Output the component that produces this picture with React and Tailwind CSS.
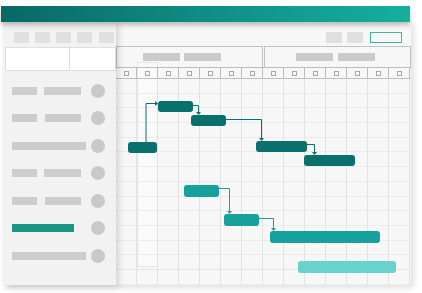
import React from "react";

const listRows = [
  { type: "split" },
  { type: "split2" },
  { type: "full" },
  { type: "split" },
  { type: "split2" },
  { type: "accent" },
  { type: "full" },
];

const dayCols = Array.from({ length: 14 });
const gridRows = Array.from({ length: 14 });

const bars = [
  { x: 42, y: 22, w: 35, h: 11, fill: "#0a706d" },
  { x: 75, y: 36, w: 35, h: 11, fill: "#0a706d" },
  { x: 12, y: 63, w: 29, h: 11, fill: "#0a706d" },
  { x: 140, y: 62, w: 51, h: 11, fill: "#0a706d" },
  { x: 188, y: 76, w: 51, h: 11, fill: "#0a706d" },
  { x: 68, y: 106, w: 35, h: 12, fill: "#16a19c" },
  { x: 108, y: 135, w: 35, h: 12, fill: "#16a19c" },
  { x: 154, y: 152, w: 110, h: 12, fill: "#16a19c" },
  { x: 182, y: 182, w: 98, h: 12, fill: "#68d2cf" },
];

// connector paths: [d, arrow tip x, arrow tip y, direction, colour]
const links = [
  { d: "M30 63 V24.5 H40", tip: [42, 24.5], dir: "right", c: "#0a706d" },
  { d: "M77 26.5 H82.5 V34", tip: [82.5, 36], dir: "down", c: "#0a706d" },
  { d: "M110 40.5 H145.5 V60", tip: [145.5, 62], dir: "down", c: "#0a706d" },
  { d: "M191 65.5 H198.5 V74", tip: [198.5, 76], dir: "down", c: "#0a706d" },
  { d: "M103 109.5 H113.5 V133", tip: [113.5, 135], dir: "down", c: "#16a19c" },
  { d: "M143 139.5 H157.5 V150", tip: [157.5, 152], dir: "down", c: "#16a19c" },
];

const Arrow = ({ tip, dir, c }) => {
  const [x, y] = tip;
  const pts =
    dir === "down"
      ? `${x - 2.5},${y - 3} ${x + 2.5},${y - 3} ${x},${y}`
      : `${x - 3},${y - 2.5} ${x - 3},${y + 2.5} ${x},${y}`;
  return <polygon points={pts} fill={c} />;
};

const ListRow = ({ type }) => (
  <div className="h-[27.5px] flex items-center pl-[9px]">
    <div className="w-[79px] flex items-center">
      {type === "split" && (
        <>
          <div className="w-[25px] h-[8px] bg-[#cdcdcd]" />
          <div className="w-[37px] h-[8px] bg-[#cdcdcd] ml-[7px]" />
        </>
      )}
      {type === "split2" && (
        <>
          <div className="w-[25px] h-[8px] bg-[#cdcdcd]" />
          <div className="w-[36px] h-[8px] bg-[#cdcdcd] ml-[8px]" />
        </>
      )}
      {type === "full" && <div className="w-[74px] h-[8px] bg-[#cdcdcd]" />}
      {type === "accent" && <div className="w-[62px] h-[8px] bg-[#1b9585]" />}
    </div>
    <div className="w-[14px] h-[14px] rounded-full bg-[#c9c9c9]" />
  </div>
);

const App = () => {
  return (
    <div className="w-[422px] h-[293px] bg-white overflow-hidden">
      {/* Title bar */}
      <div className="relative z-20 ml-[1px] mt-[6px] w-[409px] h-[16px] bg-gradient-to-r from-[#086866] via-[#0f8d84] to-[#15b09f] shadow-[0_3px_5px_rgba(0,0,0,0.25)]" />

      {/* Window body */}
      <div className="ml-[3px] w-[408px] h-[263px] bg-[#f7f7f7] flex shadow-[3px_3px_6px_rgba(0,0,0,0.12)]">
        {/* Left list panel */}
        <div className="relative z-10 w-[113px] h-full bg-[#f2f2f2] flex flex-col shadow-[3px_2px_6px_rgba(0,0,0,0.14)]">
          <div className="flex gap-[6px] pl-[11px] pt-[10px]">
            <div className="w-[15px] h-[11px] bg-[#e0e0e0]" />
            <div className="w-[15px] h-[11px] bg-[#e0e0e0]" />
            <div className="w-[15px] h-[11px] bg-[#e0e0e0]" />
            <div className="w-[15px] h-[11px] bg-[#e0e0e0]" />
            <div className="w-[15px] h-[11px] bg-[#e0e0e0] ml-[1px]" />
          </div>
          <div className="ml-[2px] mt-[4px] h-[24px] flex border border-[#dedede] bg-white">
            <div className="w-[64px] border-r border-[#dedede]" />
            <div className="flex-1" />
          </div>
          <div className="mt-[6px] flex flex-col">
            {listRows.map((r, i) => (
              <ListRow key={i} type={r.type} />
            ))}
          </div>
        </div>

        {/* Chart area */}
        <div className="relative w-[295px] h-full flex flex-col">
          {/* Today column highlight */}
          <div className="absolute left-[21px] top-[40px] w-[21px] h-[205px] border border-[#e6e6e6] bg-[#fafafa]" />

          <div className="relative h-[24px] flex justify-end items-start pt-[10px] pr-[9px]">
            <div className="w-[16px] h-[11px] bg-[#e0e0e0]" />
            <div className="w-[16px] h-[11px] bg-[#e0e0e0] ml-[5px]" />
            <div className="w-[32px] h-[11px] border border-[#3bb89c] ml-[7px]" />
          </div>

          <div className="relative h-[21px] flex gap-[1px]">
            <div className="w-[147px] h-full border border-b-0 border-[#c2c2c2] flex items-center gap-[4px] pl-[26px]">
              <div className="w-[37px] h-[8px] bg-[#cbcbcb]" />
              <div className="w-[37px] h-[8px] bg-[#cbcbcb]" />
            </div>
            <div className="flex-1 h-full border border-b-0 border-[#c2c2c2] flex items-center gap-[5px] pl-[31px]">
              <div className="w-[37px] h-[8px] bg-[#cbcbcb]" />
              <div className="w-[37px] h-[8px] bg-[#cbcbcb]" />
            </div>
          </div>

          <div className="relative h-[12px] flex border-y border-[#bdbdbd]">
            {dayCols.map((_, i) => (
              <div
                key={i}
                className="w-[21px] h-full border-r border-[#bdbdbd] flex items-center justify-center"
              >
                <div className="w-[5px] h-[5px] border border-[#a9a9a9]" />
              </div>
            ))}
          </div>

          {/* Grid body */}
          <div className="relative flex-1">
            <div className="flex flex-col">
              {gridRows.map((_, i) => (
                <div
                  key={i}
                  className={
                    i === 12
                      ? "h-[14.7px] border-b border-[#d9ece9]"
                      : "h-[14.7px] border-b border-[#ececec]"
                  }
                />
              ))}
            </div>
            <div className="absolute inset-0 flex">
              {dayCols.map((_, i) => (
                <div key={i} className="w-[21px] h-full border-r border-[#e3e3e3]" />
              ))}
            </div>
            <svg
              className="absolute left-0 top-0"
              width="295"
              height="206"
              viewBox="0 0 295 206"
            >
              {links.map((l, i) => (
                <g key={i}>
                  <path d={l.d} fill="none" stroke={l.c} strokeWidth="1" />
                  <Arrow tip={l.tip} dir={l.dir} c={l.c} />
                </g>
              ))}
              {bars.map((b, i) => (
                <rect key={i} x={b.x} y={b.y} width={b.w} height={b.h} rx="3" fill={b.fill} />
              ))}
            </svg>
          </div>
        </div>
      </div>
    </div>
  );
};

export default App;
